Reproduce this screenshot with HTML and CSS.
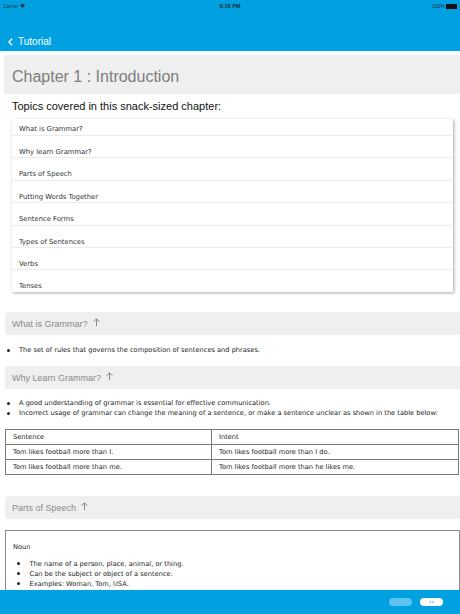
FILE: index.html
```html
<!DOCTYPE html>
<html lang="en">
<head>
<meta charset="utf-8">
<title>Tutorial</title>
<link rel="stylesheet" href="styles.css">
</head>
<body>
<div class="app">
  <div class="statusbar">
    <span class="carrier">Carrier
      <svg class="wifi" width="5" height="4" viewBox="0 0 10 8"><path d="M5 8 L0 2 Q5 -2 10 2 Z" fill="#333"/></svg>
    </span>
    <span class="time">8:18 PM</span>
    <span class="battery">100%
      <span class="batt"><span class="batt-fill"></span></span>
    </span>
  </div>
  <header class="nav">
    <svg class="chev" width="5" height="8" viewBox="0 0 5 8"><path d="M4 0.8 L1 4 L4 7.2" fill="none" stroke="#fff" stroke-width="1.4"/></svg>
    <span class="nav-title">Tutorial</span>
  </header>

  <main class="content">
    <h1 class="chapter">Chapter 1 : Introduction</h1>
    <p class="intro">Topics covered in this snack-sized chapter:</p>
    <ul class="toc">
      <li>What is Grammar?</li>
      <li>Why learn Grammar?</li>
      <li>Parts of Speech</li>
      <li>Putting Words Together</li>
      <li>Sentence Forms</li>
      <li>Types of Sentences</li>
      <li>Verbs</li>
      <li>Tenses</li>
    </ul>

    <h2 class="sec">What is Grammar?
      <svg class="up" width="7" height="8" viewBox="0 0 7 8"><path d="M3.5 8 V1 M0.6 3.8 L3.5 0.8 L6.4 3.8" fill="none" stroke="#7a7a7a" stroke-width="0.9"/></svg>
    </h2>
    <ul class="bullets b1">
      <li>The set of rules that governs the composition of sentences and phrases.</li>
    </ul>

    <h2 class="sec">Why Learn Grammar?
      <svg class="up" width="7" height="8" viewBox="0 0 7 8"><path d="M3.5 8 V1 M0.6 3.8 L3.5 0.8 L6.4 3.8" fill="none" stroke="#7a7a7a" stroke-width="0.9"/></svg>
    </h2>
    <ul class="bullets b2">
      <li>A good understanding of grammar is essential for effective communication.</li>
      <li>Incorrect usage of grammar can change the meaning of a sentence, or make a sentence unclear as shown in the table below:</li>
    </ul>

    <table class="grid">
      <tr><td class="c1">Sentence</td><td>Intent</td></tr>
      <tr><td class="c1">Tom likes football more than I.</td><td>Tom likes football more than I do.</td></tr>
      <tr><td class="c1">Tom likes football more than me.</td><td>Tom likes football more than he likes me.</td></tr>
    </table>

    <h2 class="sec sec3">Parts of Speech
      <svg class="up" width="7" height="8" viewBox="0 0 7 8"><path d="M3.5 8 V1 M0.6 3.8 L3.5 0.8 L6.4 3.8" fill="none" stroke="#7a7a7a" stroke-width="0.9"/></svg>
    </h2>

    <div class="noun">
      <div class="noun-title">Noun</div>
      <ul class="bullets b3">
        <li>The name of a person, place, animal, or thing.</li>
        <li>Can be the subject or object of a sentence.</li>
        <li>Examples: Woman, Tom, USA.</li>
      </ul>
    </div>
  </main>

  <footer class="bottombar">
    <span class="pill pill-off"></span>
    <span class="pill pill-on">&rsaquo;&rsaquo;</span>
  </footer>
</div>
</body>
</html>
```

FILE: styles.css
```css
html, body {
  margin: 0;
  padding: 0;
  background: #fff;
}

.app {
  height: 614px;
  display: flex;
  flex-direction: column;
  overflow: hidden;
  font-family: "DejaVu Sans", Verdana, sans-serif;
}

/* status bar */
.statusbar {
  height: 12px;
  background: #01a1e1;
  display: flex;
  align-items: center;
  justify-content: space-between;
  padding: 0 3px;
  font-family: "Liberation Sans", Arial, sans-serif;
  font-size: 5px;
  color: #1f3b4a;
}
.carrier {
  display: flex;
  align-items: center;
  gap: 2px;
  width: 40px;
}
.time {
  font-weight: bold;
  font-size: 5.5px;
  color: #1a2e3a;
}
.battery {
  display: flex;
  align-items: center;
  gap: 1px;
  width: 40px;
  justify-content: flex-end;
  color: #1a2e3a;
}
.batt {
  width: 9px;
  height: 3px;
  border: 0.5px solid #111;
  display: flex;
}
.batt-fill {
  flex: 1;
  background: #111;
}

/* nav */
.nav {
  height: 39px;
  box-sizing: border-box;
  background: #01a1e1;
  display: flex;
  align-items: center;
  padding: 20px 0 0 8px;
  box-shadow: 0 1px 3px rgba(0, 0, 0, 0.08);
  position: relative;
  z-index: 1;
}
.chev {
  display: block;
  margin-right: 5px;
}
.nav-title {
  font-family: "Liberation Sans", Arial, sans-serif;
  font-size: 10px;
  color: #fff;
  line-height: 12px;
}

/* content */
.content {
  flex: 1;
  overflow: hidden;
  padding-left: 5px;
}

.chapter {
  margin: 4px 0 0 -1px;
  background: #efefef;
  border-radius: 3px 0 0 3px;
  height: 39px;
  box-sizing: border-box;
  padding: 13px 0 0 8px;
  font-family: "Liberation Sans", Arial, sans-serif;
  font-weight: normal;
  font-size: 16px;
  line-height: 18px;
  color: #7d7d7d;
}

.intro {
  margin: 5px 0 0 7px;
  font-family: "Liberation Sans", Arial, sans-serif;
  font-size: 11px;
  line-height: 14px;
  color: #111;
}

.toc {
  list-style: none;
  margin: 6px 7px 0 7px;
  padding: 0;
  background: #fff;
  box-shadow: 1px 1px 3px rgba(0, 0, 0, 0.35);
}
.toc li {
  height: 22.4px;
  box-sizing: border-box;
  padding: 12px 0 0 7px;
  font-size: 6.8px;
  line-height: 8px;
  color: #333;
  border-bottom: 1px solid #ececec;
}
.toc li:first-child {
  height: 17px;
  padding-top: 6px;
}
.toc li:last-child {
  border-bottom: none;
  height: 22px;
}

.sec {
  margin: 20px 0 0 0;
  height: 23px;
  background: #efefef;
  border-radius: 3px 0 0 3px;
  display: flex;
  align-items: center;
  padding-left: 7px;
  font-family: "Liberation Sans", Arial, sans-serif;
  font-weight: normal;
  font-size: 9px;
  color: #8a8a8a;
}
.up {
  display: block;
  margin: -3px 0 0 5px;
}

.bullets {
  list-style: none;
  margin: 0;
  padding: 0 0 0 2px;
  font-size: 6.65px;
  line-height: 10px;
  color: #222;
}
.bullets li {
  display: flex;
  align-items: center;
  white-space: nowrap;
}
.bullets li::before {
  content: "";
  width: 3px;
  height: 3px;
  border-radius: 50%;
  background: #222;
  margin-right: 9px;
  flex: none;
}
.b1 {
  margin: 10px 0 11px 0;
}
.b1 + .sec {
  margin-top: 0;
}
.b2 {
  margin: 9px 0 11px 0;
}

.grid {
  border-collapse: collapse;
  width: 454px;
  font-size: 6.65px;
  color: #222;
}
.grid td {
  border: 1px solid #7a7a7a;
  height: 14px;
  padding: 0 7px;
  line-height: 14px;
  white-space: nowrap;
}
.grid .c1 {
  width: 191px;
}

.sec3 {
  margin-top: 21px;
}

.noun {
  margin-top: 11px;
  border: 1px solid #8a8a8a;
  padding: 11px 7px 0 7px;
  height: 80px;
  font-size: 6.65px;
  color: #222;
}
.noun-title {
  line-height: 10px;
}
.b3 {
  margin-top: 6.5px;
  padding-left: 3.5px;
}
.b3 li::before {
  margin-right: 10px;
}

/* bottom bar */
.bottombar {
  height: 24px;
  background: #01a1e1;
  display: flex;
  justify-content: flex-end;
  align-items: center;
  gap: 8px;
  padding-right: 17px;
  flex: none;
}
.pill {
  width: 23px;
  height: 8px;
  border-radius: 4px;
  display: flex;
  align-items: center;
  justify-content: center;
  font-family: "DejaVu Sans", sans-serif;
  font-size: 7px;
  line-height: 8px;
}
.pill-off {
  background: #5cc5ef;
}
.pill-on {
  background: #fff;
  color: #1e9ad6;
}
```
